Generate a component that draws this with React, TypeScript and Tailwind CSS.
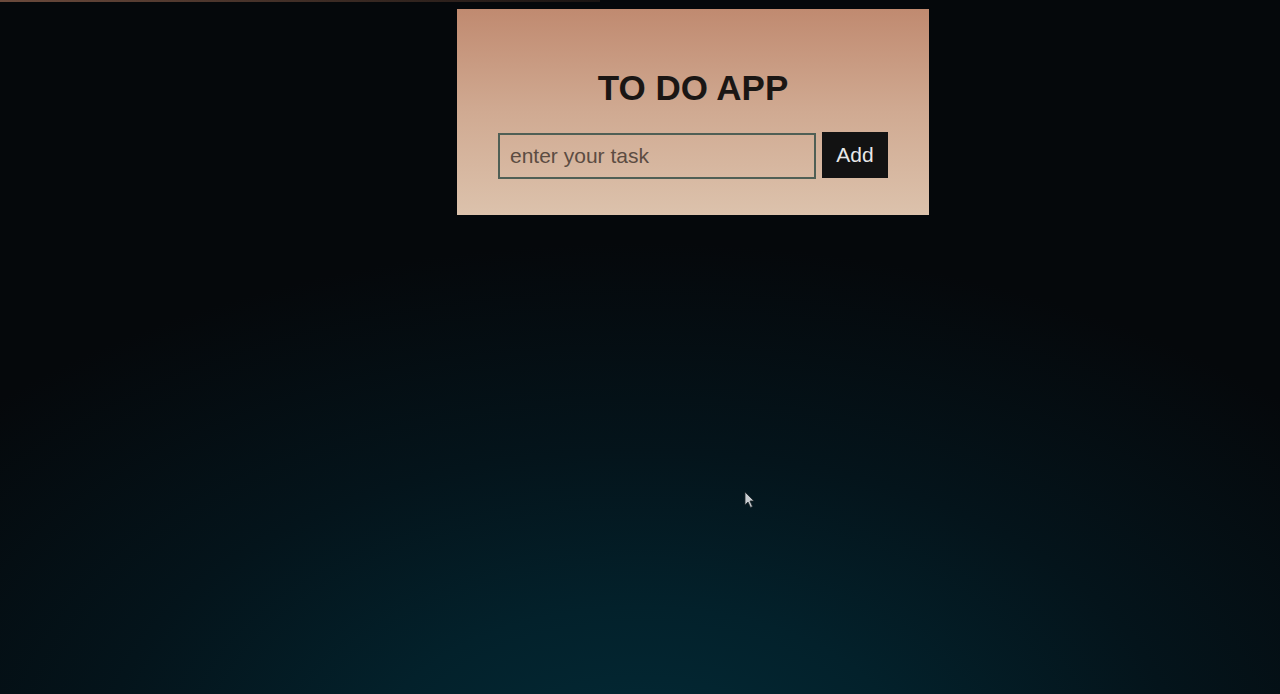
import React from "react";

export default function App() {
  return (
    <div
      className="relative h-[694px] w-[1280px] overflow-hidden bg-[#05070a]"
      style={{ fontFamily: '"Liberation Sans", Arial, sans-serif' }}
    >
      <div className="absolute inset-0 bg-[radial-gradient(ellipse_70%_75%_at_50%_110%,#032a36_0%,#03212b_30%,#04141b_60%,#05080b_100%)]" />
      <div className="absolute left-0 top-0 h-[2px] w-[600px] bg-gradient-to-r from-[#6b4a3c] to-[#1a1412]" />
      <div className="relative flex justify-center pt-[9px]">
        <div className="ml-[106px] flex h-[206px] w-[472px] flex-col items-center bg-gradient-to-b from-[#c08a70] via-[#d0aa92] to-[#dcc2ac] pt-[59px]">
          <h1 className="text-[35px] font-bold leading-[40px] text-[#1a1614]">TO DO APP</h1>
          <div className="mt-[25px] flex items-start gap-[6px]">
            <input
              placeholder="enter your task"
              className="h-[46px] w-[318px] border-2 border-[#4f5f55] bg-transparent px-[10px] text-[21px] text-[#3a2e28] outline-none placeholder:text-[#5c4c42]"
            />
            <button className="mt-[-1px] h-[46px] w-[66px] bg-[#121212] text-[21px] text-[#e8e8e8]">Add</button>
          </div>
        </div>
      </div>
      <svg className="absolute left-[744px] top-[491px]" width="12" height="18" viewBox="0 0 12 18">
        <path d="M1 1 L1 14 L4 11 L6.5 16.5 L8.5 15.5 L6 10 L10 10 Z" fill="#c8ccd0" stroke="#20282c" strokeWidth="0.8" />
      </svg>
    </div>
  );
}
